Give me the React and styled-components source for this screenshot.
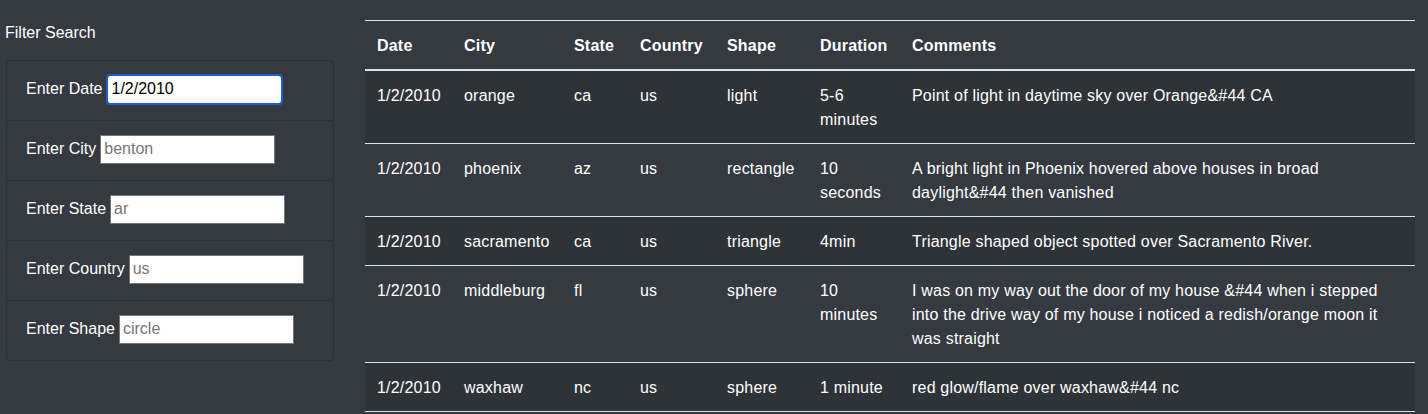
import React from 'react'
import styled, { createGlobalStyle } from 'styled-components'

const GlobalStyle = createGlobalStyle`
  body {
    margin: 0;
    background: #343a40;
    color: #fff;
    font-family: "Liberation Sans", Arial, sans-serif;
    font-size: 16px;
    line-height: 1.5;
  }
`

const Page = styled.div`
  display: grid;
  grid-template-columns: 357px 1050px;
  column-gap: 8px;
  height: 414px;
  overflow: hidden;
`

const Sidebar = styled.aside`
  padding: 21px 0 0 5px;
`

const SideTitle = styled.div`
  font-size: 16px;
  line-height: 24px;
  margin-bottom: 15px;
`

const Card = styled.ul`
  list-style: none;
  margin: 0 0 0 1px;
  padding: 0;
  width: 328px;
  border: 1px solid #2b3036;
  border-top: none;
  border-radius: 4px;
  box-sizing: border-box;
  overflow: hidden;
`

const Item = styled.li`
  display: flex;
  align-items: center;
  height: 60px;
  padding: 0 0 3px 19px;
  box-sizing: border-box;
  border-top: 1px solid #2b3036;
  border-radius: ${p => (p.first ? '4px 4px 0 0' : '0')};
`

const Label = styled.label`
  margin-right: 4px;
`

const Input = styled.input`
  width: 175px;
  height: 29px;
  box-sizing: border-box;
  padding: 1px 3px;
  font: 16px "Liberation Sans", Arial, sans-serif;
  color: #000;
  background: #fff;
  border: 1px solid #767676;
  border-radius: ${p => (p.focused ? '3px' : '0')};
  outline: ${p => (p.focused ? '2px solid #1a5fd0' : 'none')};
  outline-offset: -1px;
  margin-left: ${p => (p.focused ? '1px' : '0')};
  &::placeholder {
    color: #767676;
  }
`

const Main = styled.main`
  padding-top: 20px;
`

const Table = styled.table`
  width: 1050px;
  border-collapse: separate;
  border-spacing: 0;
  table-layout: fixed;
  color: #fff;
  letter-spacing: 0.2px;
`

const Th = styled.th`
  text-align: left;
  font-weight: bold;
  padding: 13px 12px 11px;
  line-height: 24px;
  vertical-align: bottom;
  border-top: 1px solid #dee2e6;
  border-bottom: 2px solid #dee2e6;
`

const Row = styled.tr`
  background: ${p => (p.odd ? '#2e3338' : 'transparent')};
`

const Td = styled.td`
  padding: 13px 12px 11px;
  line-height: 24px;
  vertical-align: top;
  border-bottom: 1px solid #dee2e6;
`

const columns = [
  ['Date', 87],
  ['City', 110],
  ['State', 66],
  ['Country', 87],
  ['Shape', 93],
  ['Duration', 92],
  ['Comments', 515]
]

const sightings = [
  ['1/2/2010', 'orange', 'ca', 'us', 'light', '5-6 minutes', 'Point of light in daytime sky over Orange&#44 CA'],
  ['1/2/2010', 'phoenix', 'az', 'us', 'rectangle', '10 seconds', 'A bright light in Phoenix hovered above houses in broad daylight&#44 then vanished'],
  ['1/2/2010', 'sacramento', 'ca', 'us', 'triangle', '4min', 'Triangle shaped object spotted over Sacramento River.'],
  ['1/2/2010', 'middleburg', 'fl', 'us', 'sphere', '10 minutes', 'I was on my way out the door of my house &#44 when i stepped into the drive way of my house i noticed a redish/orange moon it was straight'],
  ['1/2/2010', 'waxhaw', 'nc', 'us', 'sphere', '1 minute', 'red glow/flame over waxhaw&#44 nc']
]

const filters = [
  ['Date', '1/2/2010', true],
  ['City', 'benton'],
  ['State', 'ar'],
  ['Country', 'us'],
  ['Shape', 'circle']
]

export default function App() {
  return (
    <Page>
      <GlobalStyle />
      <Sidebar>
        <SideTitle>Filter Search</SideTitle>
        <Card>
          {filters.map(([name, hint, focused], i) => (
            <Item key={name} first={i === 0}>
              <Label>Enter {name}</Label>
              {focused ? (
                <Input focused defaultValue={hint} />
              ) : (
                <Input placeholder={hint} />
              )}
            </Item>
          ))}
        </Card>
      </Sidebar>
      <Main>
        <Table>
          <colgroup>
            {columns.map(([name, w]) => <col key={name} style={{ width: w }} />)}
          </colgroup>
          <thead>
            <tr>
              {columns.map(([name]) => <Th key={name}>{name}</Th>)}
            </tr>
          </thead>
          <tbody>
            {sightings.map((row, i) => (
              <Row key={i} odd={i % 2 === 0}>
                {row.map((cell, j) => <Td key={j}>{cell}</Td>)}
              </Row>
            ))}
          </tbody>
        </Table>
      </Main>
    </Page>
  )
}
